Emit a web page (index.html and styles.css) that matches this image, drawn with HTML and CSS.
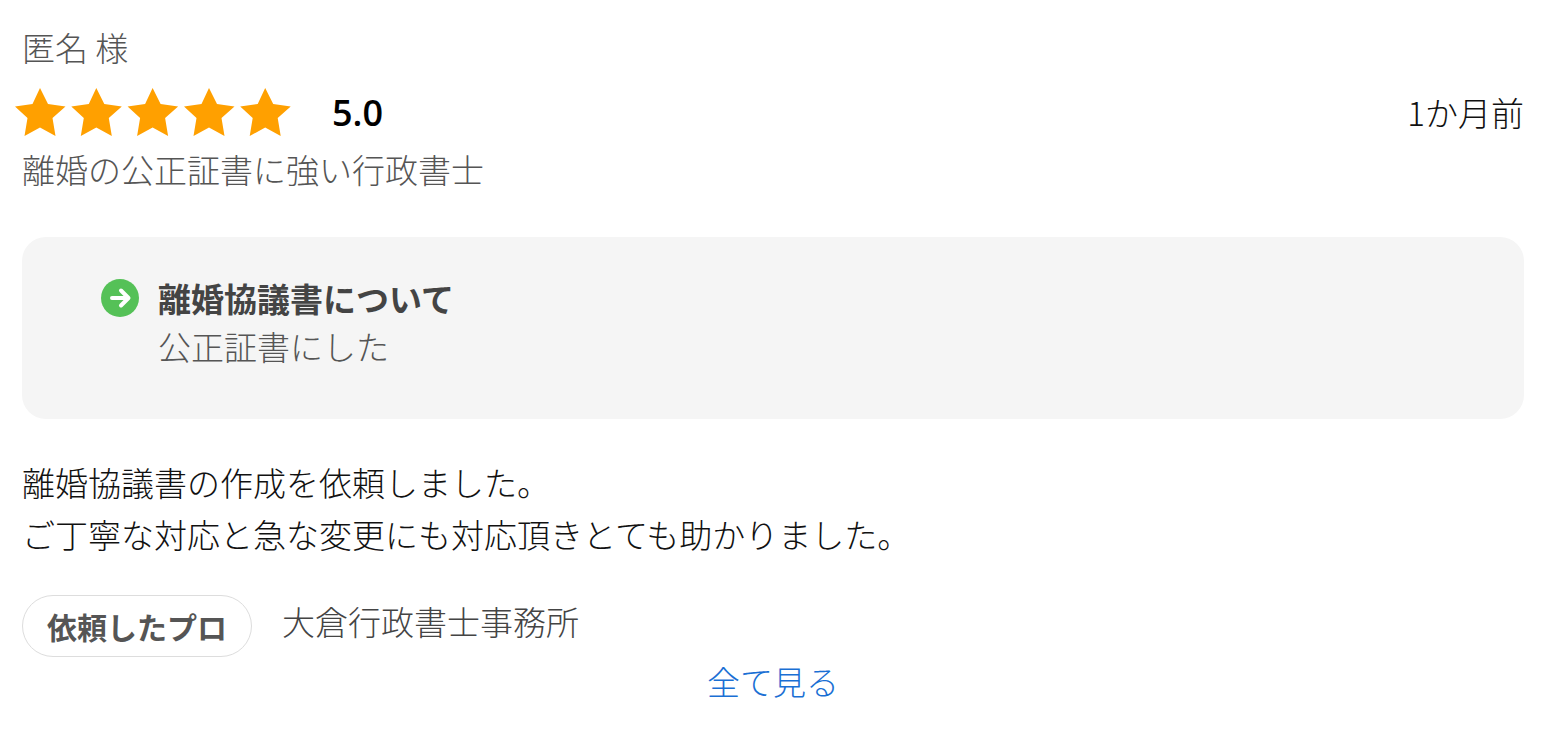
FILE: index.html
```
<!DOCTYPE html>
<html lang="ja">
<head>
  <meta charset="UTF-8" />
  <meta name="viewport" content="width=device-width, initial-scale=1.0"/>
  <title>口コミ</title>
  <link rel="stylesheet" href="styles.css">
</head>
<body>

  <article class="review">
    <p class="reviewer">匿名 様</p>

    <!-- Rating -->
    <div class="rating-row">
      <svg class="stars" viewBox="0 0 276 48" role="img" aria-label="5.0">
        <defs>
          <path id="star" d="M25 0 L33 16 L50.5 18.5 L37.5 30 L40.5 48 L25 39.5 L9.5 48 L12.5 30 L0 18.5 L17.5 16 Z"/>
        </defs>
        <use href="#star" x="0"/>
        <use href="#star" x="56.3"/>
        <use href="#star" x="112.6"/>
        <use href="#star" x="169"/>
        <use href="#star" x="225.2"/>
      </svg>
      <span class="score">5.0</span>
      <time class="date">1か月前</time>
    </div>
    <p class="category">離婚の公正証書に強い行政書士</p>

    <!-- Question and answer -->
    <section class="answer-box">
      <svg class="arrow" viewBox="0 0 38 38" aria-hidden="true">
        <circle cx="19" cy="19" r="19"/>
        <path d="M11 19 H27 M20 11.5 L27.5 19 L20 26.5"/>
      </svg>
      <div>
        <h2 class="question">離婚協議書について</h2>
        <p class="answer">公正証書にした</p>
      </div>
    </section>

    <p class="comment">離婚協議書の作成を依頼しました。<br>ご丁寧な対応と急な変更にも対応頂きとても助かりました。</p>

    <div class="pro-row">
      <span class="pro-label">依頼したプロ</span>
      <span class="pro-name">大倉行政書士事務所</span>
    </div>

    <a class="show-all" href="#">全て見る</a>
  </article>

</body>
</html>
```

FILE: styles.css
```
* {
  box-sizing: border-box;
  margin: 0;
  padding: 0;
}

body {
  font-family: 'Noto Sans CJK JP', sans-serif;
  font-size: 33px;
  font-weight: 300;
  line-height: 52px;
  background-color: white;
  color: #111;
}

.review {
  padding: 21px 23px 28px 22px;
}

.reviewer,
.category,
.answer {
  color: #555;
}

.rating-row {
  display: flex;
  align-items: center;
  height: 70px;
  padding-top: 8px;
}

.stars {
  width: 276px;
  height: 48px;
  margin-left: -7px;
  fill: #ffa000;
}

.score {
  margin-left: 41px;
  padding-top: 2px;
  font-family: 'Open Sans', sans-serif;
  font-size: 36px;
  font-weight: 600;
  color: black;
}

.date {
  margin-left: auto;
}

.answer-box {
  display: flex;
  gap: 19px;
  margin: 42px 0 37px;
  padding: 37px 79px 49px;
  border-radius: 24px;
  background-color: #f5f5f5;
}

.arrow {
  width: 38px;
  height: 38px;
  margin-top: 5px;
  fill: #55c157;
}

.arrow path {
  fill: none;
  stroke: white;
  stroke-width: 4;
  stroke-linecap: round;
  stroke-linejoin: round;
}

.question {
  font-size: 33px;
  font-weight: 700;
  line-height: 48px;
  color: #444;
}

.answer {
  line-height: 48px;
}

.pro-row {
  display: flex;
  gap: 30px;
  margin-top: 35px;
}

.pro-label {
  padding: 4px 24px;
  border: 1px solid #ddd;
  border-radius: 31px;
  font-size: 30px;
  font-weight: 700;
  color: #555;
}

.pro-name {
  color: #444;
}

.show-all {
  display: block;
  line-height: 48px;
  text-align: center;
  text-decoration: none;
  color: #1a6fd4;
}
```
